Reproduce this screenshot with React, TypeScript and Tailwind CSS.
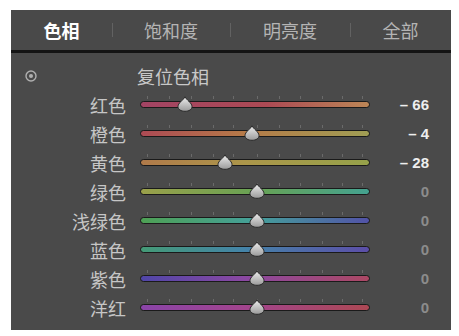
const tabs = [
  { label: "色相", w: "w-[101px]", active: true },
  { label: "饱和度", w: "w-[118px]", active: false },
  { label: "明亮度", w: "w-[120px]", active: false },
  { label: "全部", w: "w-[101px]", active: false },
];

type Row = { label: string; value: number; thumb: number; track: string };

// thumb = px offset of thumb center from track left edge
const rows: Row[] = [
  { label: "红色", value: -66, thumb: 45, track: "bg-[linear-gradient(90deg,#a24464,#ac4a54_55%,#bc8656)]" },
  { label: "橙色", value: -4, thumb: 112, track: "bg-[linear-gradient(90deg,#ac4a54,#b67a48_45%,#a09e54)]" },
  { label: "黄色", value: -28, thumb: 85, track: "bg-[linear-gradient(90deg,#b07a4a,#ac964a_45%,#96a24a)]" },
  { label: "绿色", value: 0, thumb: 117, track: "bg-[linear-gradient(90deg,#9aa04a,#68a254_50%,#44a290)]" },
  { label: "浅绿色", value: 0, thumb: 117, track: "bg-[linear-gradient(90deg,#4ea054,#44a09a_50%,#5252a8)]" },
  { label: "蓝色", value: 0, thumb: 117, track: "bg-[linear-gradient(90deg,#449a76,#4484a8_45%,#5c4ea8)]" },
  { label: "紫色", value: 0, thumb: 117, track: "bg-[linear-gradient(90deg,#5046a8,#8a48a2_45%,#ac4864)]" },
  { label: "洋红", value: 0, thumb: 117, track: "bg-[linear-gradient(90deg,#8a44a8,#a2448e_45%,#ac4854)]" },
];

const ticks = [7, 29, 51, 73, 93, 117, 139, 160, 182, 202, 222];

function Thumb({ x }: { x: number }) {
  return (
    <svg
      width="16"
      height="16"
      viewBox="0 0 16 16"
      className="absolute top-1/2 -translate-x-1/2 -translate-y-[9px]"
      style={{ left: x }}
    >
      <defs>
        <linearGradient id="tg" x1="0" y1="0" x2="0" y2="1">
          <stop offset="0" stopColor="#eeeeee" />
          <stop offset="1" stopColor="#9a9a9a" />
        </linearGradient>
      </defs>
      <path
        d="M8 0.8 C9.5 4 15 7 15 10.5 C15 13.5 12 15.3 8 15.3 C4 15.3 1 13.5 1 10.5 C1 7 6.5 4 8 0.8 Z"
        fill="url(#tg)"
        stroke="#2a2a2a"
        strokeWidth="1"
      />
    </svg>
  );
}

function Slider({ row }: { row: Row }) {
  return (
    <div className="relative ml-[14px] w-[230px] h-[29px] flex items-center">
      {ticks.map((t) => (
        <span key={t} className="absolute top-[6px] w-px h-[3px] bg-[#6a6a6a]" style={{ left: t }} />
      ))}
      <div className={`w-full h-[7px] rounded-full border border-[#1a1a1a] ${row.track}`} />
      <Thumb x={row.thumb} />
    </div>
  );
}

export default function App() {
  return (
    <div className="w-[459px] h-[336px] bg-white pt-[10px] pl-[11px]" style={{ fontFamily: '"Noto Sans CJK SC", "Liberation Sans", sans-serif' }}>
      <div className="w-[440px] h-[320px] bg-[#4a4a4a] flex flex-col">
        <header className="h-[40px] flex items-center bg-[#494949]">
          {tabs.map((t, i) => (
            <div key={t.label} className={`${t.w} h-full relative flex items-center justify-center`}>
              {i > 0 && <span className="absolute left-0 top-[13px] w-px h-[14px] bg-[#626262]" />}
              <span className={`text-[18px] leading-none ${t.active ? "text-white font-bold" : "text-[#b4b4b4]"}`}>{t.label}</span>
            </div>
          ))}
        </header>
        <div className="h-[3px] bg-[#141414]" />

        <main className="pt-[8px] flex flex-col">
          <div className="h-[29px] flex items-center">
            <div className="w-[115px] pl-[14px] flex items-center">
              <svg width="12" height="12" viewBox="0 0 12 12">
                <circle cx="6" cy="6" r="5" fill="none" stroke="#b0b0b0" strokeWidth="1.4" />
                <circle cx="6" cy="6" r="2" fill="#b0b0b0" />
              </svg>
            </div>
            <span className="ml-[11px] text-[18px] leading-none text-[#c8c8c8]">复位色相</span>
          </div>

          {rows.map((r) => (
            <div key={r.label} className="h-[29px] flex items-center">
              <span className="w-[115px] text-right text-[18px] leading-none text-[#c6c6c6]">{r.label}</span>
              <Slider row={r} />
              <span
                className={`w-[59px] text-right text-[15px] leading-none font-bold ${r.value === 0 ? "text-[#8c8c8c]" : "text-[#eeeeee]"}`}
                style={{ fontFamily: '"Liberation Sans", sans-serif' }}
              >
                {r.value === 0 ? "0" : `– ${Math.abs(r.value)}`}
              </span>
            </div>
          ))}
        </main>
      </div>
    </div>
  );
}
